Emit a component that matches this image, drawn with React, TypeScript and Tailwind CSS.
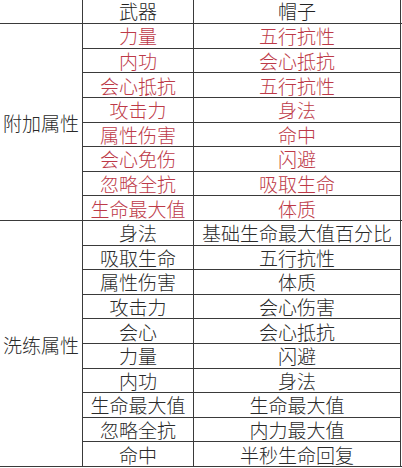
import React from "react";

const RED = "text-[#bd3a48]";

const sec1: [string, string][] = [
  ["力量", "五行抗性"],
  ["内功", "会心抵抗"],
  ["会心抵抗", "五行抗性"],
  ["攻击力", "身法"],
  ["属性伤害", "命中"],
  ["会心免伤", "闪避"],
  ["忽略全抗", "吸取生命"],
  ["生命最大值", "体质"],
];

const sec2: [string, string][] = [
  ["身法", "基础生命最大值百分比"],
  ["吸取生命", "五行抗性"],
  ["属性伤害", "体质"],
  ["攻击力", "会心伤害"],
  ["会心", "会心抵抗"],
  ["力量", "闪避"],
  ["内功", "身法"],
  ["生命最大值", "生命最大值"],
  ["忽略全抗", "内力最大值"],
  ["命中", "半秒生命回复"],
];

function Section({
  label,
  rows,
  red,
  h,
}: {
  label: string;
  rows: [string, string][];
  red: boolean;
  h: string;
}) {
  const color = red ? RED : "text-[#2a2a2a]";
  return (
    <div className={`flex ${h} border-b border-[#3a3a3a]`}>
      <div className="w-[83px] border-r border-[#3a3a3a] flex items-center justify-center text-[#2a2a2a] pt-[2px]">
        {label}
      </div>
      <div className="flex flex-col">
        {rows.map(([a, b], i) => (
          <div
            key={i}
            className={`flex flex-1 ${i < rows.length - 1 ? "border-b border-[#3a3a3a]" : ""}`}
          >
            <div className={`w-[111px] border-r border-[#3a3a3a] flex items-center justify-center pt-[1px] ${color}`}>
              {a}
            </div>
            <div className={`w-[207px] border-r border-[#3a3a3a] flex items-center justify-center pt-[1px] ${color}`}>
              {b}
            </div>
          </div>
        ))}
      </div>
    </div>
  );
}

export default function App() {
  return (
    <div
      className="w-[402px] h-[468px] bg-white overflow-hidden text-[19px] leading-[20px] font-light"
      style={{ fontFamily: '"Noto Sans CJK SC", sans-serif' }}
    >
      <div className="flex h-[24px] border-b border-[#3a3a3a]">
        <div className="w-[83px] border-r border-[#3a3a3a]" />
        <div className="w-[111px] border-r border-[#3a3a3a] flex items-end justify-center pb-[2px] text-[#222]">
          武器
        </div>
        <div className="w-[207px] border-r border-[#3a3a3a] flex items-end justify-center pb-[2px] text-[#222]">
          帽子
        </div>
      </div>
      <Section label="附加属性" rows={sec1} red={true} h="h-[197px]" />
      <Section label="洗练属性" rows={sec2} red={false} h="h-[246px]" />
    </div>
  );
}
